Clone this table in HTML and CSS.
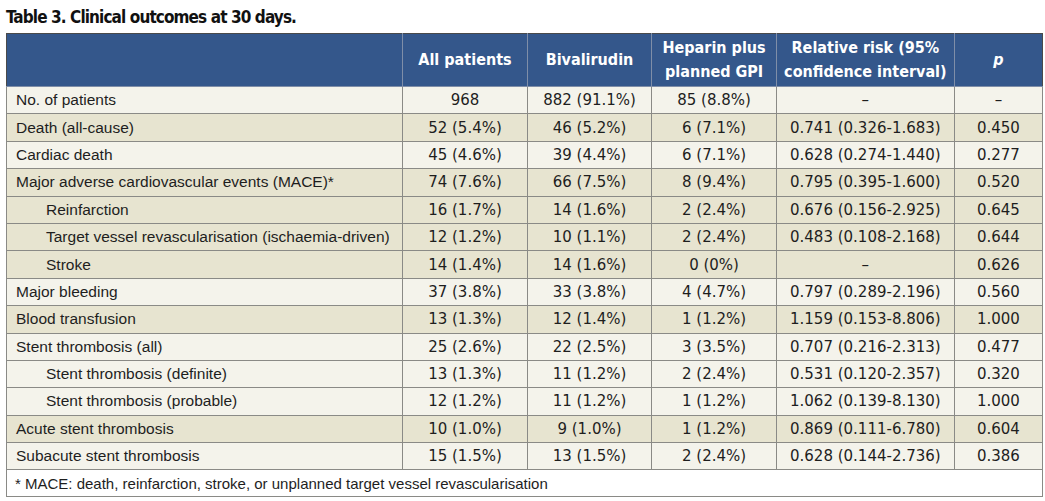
FILE: index.html
```html
<!DOCTYPE html>
<html lang="en">
<head>
<meta charset="utf-8">
<title>Table 3</title>
<link rel="stylesheet" href="styles.css">
</head>
<body>
<div class="page">
  <h1 class="title">Table 3. Clinical outcomes at 30 days.</h1>
  <table class="outcomes">
    <colgroup>
      <col class="c-label"><col class="c-num"><col class="c-num"><col class="c-num"><col class="c-rr"><col class="c-p">
    </colgroup>
    <thead>
      <tr>
        <th></th>
        <th>All patients</th>
        <th>Bivalirudin</th>
        <th>Heparin plus<br>planned GPI</th>
        <th>Relative risk (95%<br>confidence interval)</th>
        <th><i>p</i></th>
      </tr>
    </thead>
    <tbody>
      <tr class="light"><td>No. of patients</td><td>968</td><td>882 (91.1%)</td><td>85 (8.8%)</td><td>–</td><td>–</td></tr>
      <tr class="dark"><td>Death (all-cause)</td><td>52 (5.4%)</td><td>46 (5.2%)</td><td>6 (7.1%)</td><td>0.741 (0.326-1.683)</td><td>0.450</td></tr>
      <tr class="light"><td>Cardiac death</td><td>45 (4.6%)</td><td>39 (4.4%)</td><td>6 (7.1%)</td><td>0.628 (0.274-1.440)</td><td>0.277</td></tr>
      <tr class="dark"><td>Major adverse cardiovascular events (MACE)*</td><td>74 (7.6%)</td><td>66 (7.5%)</td><td>8 (9.4%)</td><td>0.795 (0.395-1.600)</td><td>0.520</td></tr>
      <tr class="dark"><td class="sub">Reinfarction</td><td>16 (1.7%)</td><td>14 (1.6%)</td><td>2 (2.4%)</td><td>0.676 (0.156-2.925)</td><td>0.645</td></tr>
      <tr class="dark"><td class="sub">Target vessel revascularisation (ischaemia-driven)</td><td>12 (1.2%)</td><td>10 (1.1%)</td><td>2 (2.4%)</td><td>0.483 (0.108-2.168)</td><td>0.644</td></tr>
      <tr class="dark"><td class="sub">Stroke</td><td>14 (1.4%)</td><td>14 (1.6%)</td><td>0 (0%)</td><td>–</td><td>0.626</td></tr>
      <tr class="light"><td>Major bleeding</td><td>37 (3.8%)</td><td>33 (3.8%)</td><td>4 (4.7%)</td><td>0.797 (0.289-2.196)</td><td>0.560</td></tr>
      <tr class="dark"><td>Blood transfusion</td><td>13 (1.3%)</td><td>12 (1.4%)</td><td>1 (1.2%)</td><td>1.159 (0.153-8.806)</td><td>1.000</td></tr>
      <tr class="light"><td>Stent thrombosis (all)</td><td>25 (2.6%)</td><td>22 (2.5%)</td><td>3 (3.5%)</td><td>0.707 (0.216-2.313)</td><td>0.477</td></tr>
      <tr class="light"><td class="sub">Stent thrombosis (definite)</td><td>13 (1.3%)</td><td>11 (1.2%)</td><td>2 (2.4%)</td><td>0.531 (0.120-2.357)</td><td>0.320</td></tr>
      <tr class="light"><td class="sub">Stent thrombosis (probable)</td><td>12 (1.2%)</td><td>11 (1.2%)</td><td>1 (1.2%)</td><td>1.062 (0.139-8.130)</td><td>1.000</td></tr>
      <tr class="dark"><td>Acute stent thrombosis</td><td>10 (1.0%)</td><td>9 (1.0%)</td><td>1 (1.2%)</td><td>0.869 (0.111-6.780)</td><td>0.604</td></tr>
      <tr class="light"><td>Subacute stent thrombosis</td><td>15 (1.5%)</td><td>13 (1.5%)</td><td>2 (2.4%)</td><td>0.628 (0.144-2.736)</td><td>0.386</td></tr>
    </tbody>
    <tfoot>
      <tr><td colspan="6">* MACE: death, reinfarction, stroke, or unplanned target vessel revascularisation</td></tr>
    </tfoot>
  </table>
</div>
</body>
</html>
```
FILE: styles.css
```css
html, body {
  margin: 0;
  padding: 0;
  background: #ffffff;
}

.page {
  padding: 7px 0 0 6px;
  width: 1037px;
}

.title {
  margin: 0 0 5px 0;
  font-family: "DejaVu Sans", sans-serif;
  font-stretch: condensed;
  font-weight: bold;
  font-size: 17px;
  letter-spacing: -0.9px;
  line-height: 21px;
  color: #111111;
}

.outcomes {
  border-collapse: collapse;
  table-layout: fixed;
  width: 1037px;
  font-family: "Liberation Sans", Arial, sans-serif;
  font-size: 15.5px;
  color: #1e1e1e;
}

.c-label { width: 396px; }
.c-num { width: 124.5px; }
.c-rr { width: 178px; }
.c-p { width: 88px; }

.outcomes th {
  background: #34578b;
  color: #ffffff;
  font-family: "DejaVu Sans", sans-serif;
  font-stretch: condensed;
  font-weight: bold;
  font-size: 16px;
  line-height: 24px;
  height: 53px;
  padding: 0 2px;
  text-align: center;
  border: 1px solid #7f8ea8;
  border-top-color: #4a4a4a;
  box-sizing: border-box;
  white-space: nowrap;
}

.outcomes th:first-child { border-left-color: #4a4a4a; }
.outcomes th:last-child { border-right-color: #4a4a4a; }

.outcomes td {
  height: 27.4px;
  padding: 0 6px;
  text-align: center;
  border: 1px solid #8a8a86;
  box-sizing: border-box;
  white-space: nowrap;
}

.outcomes tbody td + td {
  font-family: "DejaVu Sans", sans-serif;
  font-size: 15px;
}

.outcomes tbody td:first-child {
  text-align: left;
  padding-left: 9px;
}

.outcomes tbody td.sub { padding-left: 39px; }

.light td { background: #f4f3eb; }
.dark td { background: #e7e4d0; }

.outcomes tfoot td {
  background: #ffffff;
  text-align: left;
  padding-left: 8px;
  height: 27px;
  font-size: 15px;
}
```
